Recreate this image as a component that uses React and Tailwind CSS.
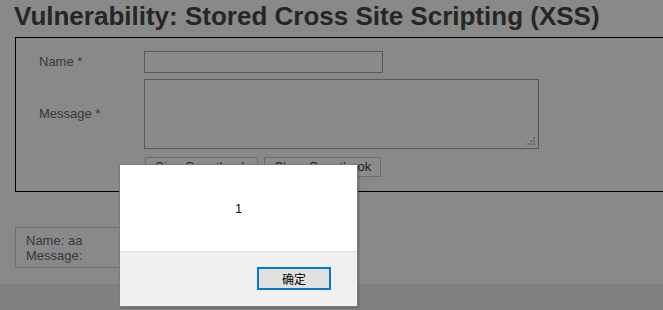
import React from 'react';

const sans = "font-['Liberation_Sans','Arial',sans-serif]";

const Grip = () => (
  <svg width="9" height="9" viewBox="0 0 9 9" className="absolute bottom-[2px] right-[2px]">
    <rect x="6" y="0" width="2" height="2" fill="#6b6b6b" />
    <rect x="3" y="3" width="2" height="2" fill="#6b6b6b" />
    <rect x="6" y="3" width="2" height="2" fill="#6b6b6b" />
    <rect x="0" y="6" width="2" height="2" fill="#6b6b6b" />
    <rect x="3" y="6" width="2" height="2" fill="#6b6b6b" />
    <rect x="6" y="6" width="2" height="2" fill="#6b6b6b" />
  </svg>
);

const AlertBox = () => (
  <div className="absolute left-[119px] top-[164px] flex h-[143px] w-[239px] flex-col border border-[#7c7c7c] bg-white shadow-[1px_1px_2px_rgba(0,0,0,0.25)]">
    <div className={`flex h-[86px] items-center justify-center pt-[2px] text-[12px] text-black ${sans}`}>1</div>
    <div className="flex flex-1 items-start justify-end border-t border-[#dfdfdf] bg-[#f0f0f0] pr-[26px] pt-[15px]">
      <button className="flex h-[23px] w-[74px] items-center justify-center border-2 border-[#0078d7] bg-[#e1e1e1] text-[12px] text-black font-['Noto_Sans_CJK_SC',sans-serif]">
        确定
      </button>
    </div>
  </div>
);

export default function App() {
  return (
    <div className={`relative flex h-[310px] w-[663px] flex-col overflow-hidden bg-[#898989] ${sans}`}>
      <h1 className="ml-[14px] mt-[1px] h-[36px] text-[26px] font-bold leading-[30px] text-[#262626] whitespace-nowrap">
        Vulnerability: Stored Cross Site Scripting (XSS)
      </h1>

      <div className="ml-[15px] w-[700px] border border-black pb-[14px] pt-[13px]">
        <div className="flex items-center">
          <div className="w-[128px] pl-[23px] text-[13px] text-[#383442]">Name *</div>
          <div className="h-[22px] w-[239px] border border-[#595959] bg-[#8a8a8a]" />
        </div>
        <div className="mt-[6px] flex items-center">
          <div className="w-[128px] pl-[23px] text-[13px] text-[#383442]">Message *</div>
          <div className="relative h-[70px] w-[395px] border border-[#595959] bg-[#8a8a8a]">
            <Grip />
          </div>
        </div>
        <div className="mt-[8px] flex gap-[6px] pl-[129px]">
          <button className="h-[20px] w-[113px] border border-[#6c6c6c] bg-[#8c8c8c] text-[13px] leading-[18px] text-[#1e1e1e]">
            Sign Guestbook
          </button>
          <button className="h-[20px] w-[117px] border border-[#6c6c6c] bg-[#8c8c8c] text-[13px] leading-[18px] text-[#1e1e1e]">
            Clear Guestbook
          </button>
        </div>
      </div>

      <div className="ml-[15px] mt-[35px] w-[220px] border border-[#6e6e6e] pb-[4px] pl-[10px] pt-[5px] text-[13px] leading-[15px] text-[#383442]">
        <div>Name: aa</div>
        <div>Message:</div>
      </div>

      <div className="mt-auto h-[26px] bg-[#808080]" />

      <AlertBox />
    </div>
  );
}
